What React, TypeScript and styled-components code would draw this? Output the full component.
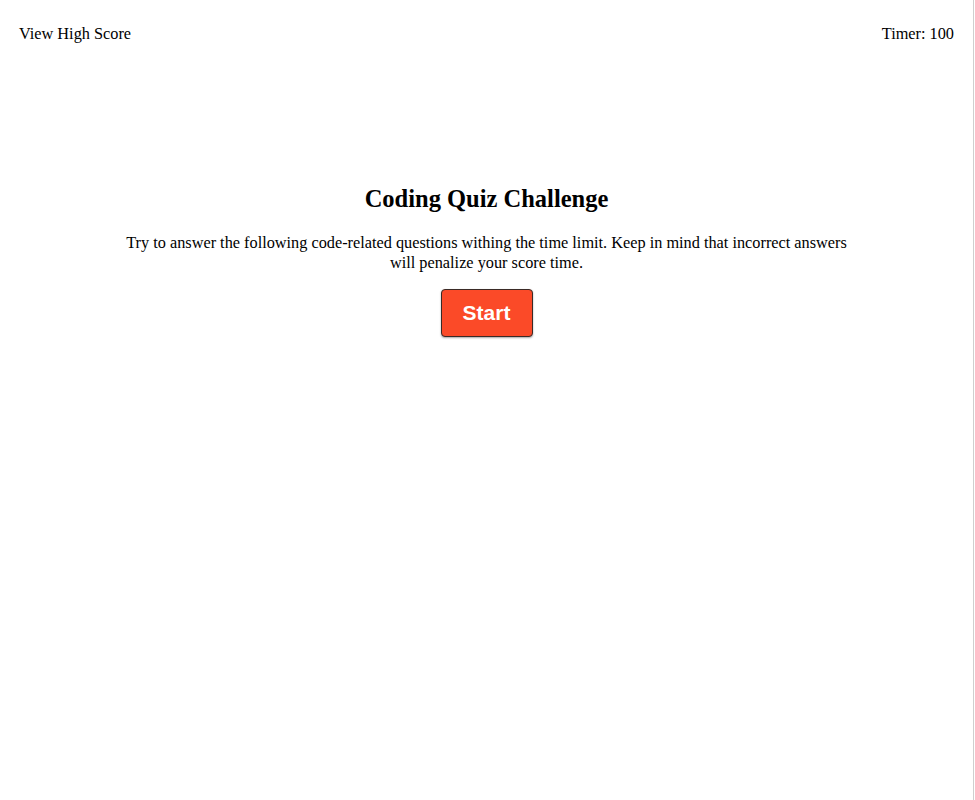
import React from "react";
import styled, { createGlobalStyle } from "styled-components";

const Global = createGlobalStyle`
  html, body { margin: 0; padding: 0; background: #fff; }
  body { font-family: "Liberation Serif", "Times New Roman", serif; color: #000; }
`;

const Page = styled.div`
  width: 973px;
  min-height: 800px;
  border-right: 1px solid #cfcfcf;
  box-sizing: content-box;
`;

const Header = styled.header`
  display: flex;
  justify-content: space-between;
  align-items: center;
  padding: 25px 19px 0 19px;
  font-size: 16.3px;
  line-height: 18px;
`;

const HeaderItem = styled.span`
  display: block;
`;

const Main = styled.main`
  display: flex;
  flex-direction: column;
  align-items: center;
  padding-top: 142px;
`;

const Title = styled.h2`
  margin: 0;
  font-size: 24.5px;
  line-height: 28px;
  font-weight: bold;
`;

const Intro = styled.p`
  margin: 20px 0 0 0;
  width: 735px;
  text-align: center;
  font-size: 16.3px;
  line-height: 20px;
`;

const StartButton = styled.button`
  margin-top: 16px;
  width: 92px;
  height: 48px;
  background: #fb4a28;
  color: #fff;
  border: 1px solid #3a2a26;
  border-radius: 4px;
  box-shadow: 0 1px 2px rgba(0, 0, 0, 0.35);
  font-family: "Liberation Sans", Arial, sans-serif;
  font-weight: bold;
  font-size: 21px;
  cursor: pointer;
`;

export default function App() {
  return (
    <>
      <Global />
      <Page>
        <Header>
          <HeaderItem>View High Score</HeaderItem>
          <HeaderItem>Timer: 100</HeaderItem>
        </Header>
        <Main>
          <Title>Coding Quiz Challenge</Title>
          <Intro>
            Try to answer the following code-related questions withing the time limit. Keep in mind that incorrect answers will penalize your score time.
          </Intro>
          <StartButton>Start</StartButton>
        </Main>
      </Page>
    </>
  );
}
